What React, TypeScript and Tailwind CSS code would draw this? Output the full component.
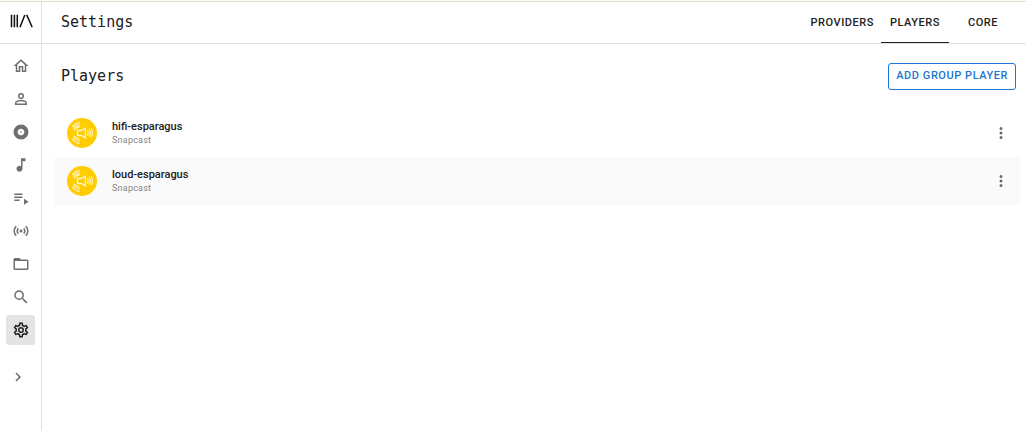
import { useState } from "react";

const icons = {
  home: "M12 5.69L17 10.19V18H15V12H9V18H7V10.19L12 5.69M12 3L2 12H5V20H11V14H13V20H19V12H22L12 3Z",
  account:
    "M12,4A4,4 0 0,1 16,8A4,4 0 0,1 12,12A4,4 0 0,1 8,8A4,4 0 0,1 12,4M12,6A2,2 0 0,0 10,8A2,2 0 0,0 12,10A2,2 0 0,0 14,8A2,2 0 0,0 12,6M12,13C14.67,13 20,14.33 20,17V20H4V17C4,14.33 9.33,13 12,13M12,14.9C9.03,14.9 5.9,16.36 5.9,17V18.1H18.1V17C18.1,16.36 14.97,14.9 12,14.9Z",
  album:
    "M12,11A1,1 0 0,0 11,12A1,1 0 0,0 12,13A1,1 0 0,0 13,12A1,1 0 0,0 12,11M12,16.5C9.5,16.5 7.5,14.5 7.5,12C7.5,9.5 9.5,7.5 12,7.5C14.5,7.5 16.5,9.5 16.5,12C16.5,14.5 14.5,16.5 12,16.5M12,2A10,10 0 0,0 2,12A10,10 0 0,0 12,22A10,10 0 0,0 22,12A10,10 0 0,0 12,2Z",
  note: "M12 3V13.55C11.41 13.21 10.73 13 10 13C7.79 13 6 14.79 6 17S7.79 21 10 21S14 19.21 14 17V7H18V3H12Z",
  playlist: "M3 10H14V12H3V10M3 6H14V8H3V6M3 14H10V16H3V14M16 13V21L22 17L16 13Z",
  radio:
    "M4.93,4.93C3.12,6.74 2,9.24 2,12C2,14.76 3.12,17.26 4.93,19.07L6.34,17.66C4.89,16.22 4,14.22 4,12C4,9.79 4.89,7.78 6.34,6.34L4.93,4.93M19.07,4.93L17.66,6.34C19.11,7.78 20,9.79 20,12C20,14.22 19.11,16.22 17.66,17.66L19.07,19.07C20.88,17.26 22,14.76 22,12C22,9.24 20.88,6.74 19.07,4.93M7.76,7.76C6.67,8.85 6,10.35 6,12C6,13.65 6.67,15.15 7.76,16.24L9.17,14.83C8.45,14.11 8,13.11 8,12C8,10.89 8.45,9.89 9.17,9.17L7.76,7.76M16.24,7.76L14.83,9.17C15.55,9.89 16,10.89 16,12C16,13.11 15.55,14.11 14.83,14.83L16.24,16.24C17.33,15.15 18,13.65 18,12C18,10.35 17.33,8.85 16.24,7.76M12,10A2,2 0 0,0 10,12A2,2 0 0,0 12,14A2,2 0 0,0 14,12A2,2 0 0,0 12,10Z",
  folder:
    "M20,18H4V8H20M20,6H12L10,4H4C2.89,4 2,4.89 2,6V18A2,2 0 0,0 4,20H20A2,2 0 0,0 22,18V8C22,6.89 21.1,6 20,6Z",
  search:
    "M9.5,3A6.5,6.5 0 0,1 16,9.5C16,11.11 15.41,12.59 14.44,13.73L14.71,14H15.5L20.5,19L19,20.5L14,15.5V14.71L13.73,14.44C12.59,15.41 11.11,16 9.5,16A6.5,6.5 0 0,1 3,9.5A6.5,6.5 0 0,1 9.5,3M9.5,5C7,5 5,7 5,9.5C5,12 7,14 9.5,14C12,14 14,12 14,9.5C14,7 12,5 9.5,5Z",
  cog: "M12,8A4,4 0 0,1 16,12A4,4 0 0,1 12,16A4,4 0 0,1 8,12A4,4 0 0,1 12,8M12,10A2,2 0 0,0 10,12A2,2 0 0,0 12,14A2,2 0 0,0 14,12A2,2 0 0,0 12,10M10,22C9.75,22 9.54,21.82 9.5,21.58L9.13,18.93C8.5,18.68 7.96,18.34 7.44,17.94L4.95,18.95C4.73,19.03 4.46,18.95 4.34,18.73L2.34,15.27C2.21,15.05 2.27,14.78 2.46,14.63L4.57,12.97L4.5,12L4.57,11L2.46,9.37C2.27,9.22 2.21,8.95 2.34,8.73L4.34,5.27C4.46,5.05 4.73,4.96 4.95,5.05L7.44,6.05C7.96,5.66 8.5,5.32 9.13,5.07L9.5,2.42C9.54,2.18 9.75,2 10,2H14C14.25,2 14.46,2.18 14.5,2.42L14.87,5.07C15.5,5.32 16.04,5.66 16.56,6.05L19.05,5.05C19.27,4.96 19.54,5.05 19.66,5.27L21.66,8.73C21.79,8.95 21.73,9.22 21.54,9.37L19.43,11L19.5,12L19.43,13L21.54,14.63C21.73,14.78 21.79,15.05 21.66,15.27L19.66,18.73C19.54,18.95 19.27,19.04 19.05,18.95L16.56,17.95C16.04,18.34 15.5,18.68 14.87,18.93L14.5,21.58C14.46,21.82 14.25,22 14,22H10M11.25,4L10.88,6.61C9.68,6.86 8.62,7.5 7.85,8.39L5.44,7.35L4.69,8.65L6.8,10.2C6.4,11.37 6.4,12.64 6.8,13.8L4.68,15.36L5.43,16.66L7.86,15.62C8.63,16.5 9.68,17.14 10.87,17.38L11.24,20H12.76L13.13,17.39C14.32,17.14 15.37,16.5 16.14,15.62L18.57,16.66L19.32,15.36L17.2,13.81C17.6,12.64 17.6,11.37 17.2,10.2L19.31,8.65L18.56,7.35L16.15,8.39C15.38,7.5 14.32,6.86 13.12,6.62L12.75,4H11.25Z",
  chevron: "M8.59,16.58L13.17,12L8.59,7.41L10,6L16,12L10,18L8.59,16.58Z",
  dots: "M12,16A2,2 0 0,1 14,18A2,2 0 0,1 12,20A2,2 0 0,1 10,18A2,2 0 0,1 12,16M12,10A2,2 0 0,1 14,12A2,2 0 0,1 12,14A2,2 0 0,1 10,12A2,2 0 0,1 12,10M12,4A2,2 0 0,1 14,6A2,2 0 0,1 12,8A2,2 0 0,1 10,6A2,2 0 0,1 12,4Z",
};

type IconName = keyof typeof icons;

function Icon({ name }: { name: IconName }) {
  return (
    <svg viewBox="0 0 24 24" className="size-[18px] fill-current" aria-hidden="true">
      <path d={icons[name]} />
    </svg>
  );
}

function Logo() {
  return (
    <svg viewBox="0 0 24 14" className="h-3.5 w-6" fill="none" stroke="#111" strokeWidth="1.5" aria-hidden="true">
      <path d="M2.5 .8V13.2M5.4 .8V13.2M8.3 .8V13.2M11 13.2L15.8 .9M17.7 .9L23.2 13.2" />
    </svg>
  );
}

function SnapcastLogo() {
  return (
    <svg viewBox="0 0 30 30" className="size-[30px] shrink-0" fill="none" stroke="#fff6cc" strokeWidth="1.1" aria-hidden="true">
      <circle cx="15" cy="15" r="15" fill="#fc0" stroke="none" />
      <path d="M10.5 12.5H14.4L18.4 10.2V19.8L14.4 17.5H10.5Z" strokeWidth="1.3" />
      <path d="M20.5 12.2Q21.8 15 20.5 17.8M22.5 11Q24.2 15 22.5 19M24.4 10.4Q26.4 15 24.4 19.6" />
      <path d="M5.3 9Q7.7 5.4 12.6 4.4M6 10.7Q8.4 7.4 12.8 6.5M7 12.2Q9.2 9.4 12.8 8.6" />
      <path d="M5.3 21Q7.7 24.6 12.6 25.6M6 19.3Q8.4 22.6 12.8 23.5M7 17.8Q9.2 20.6 12.8 21.4" />
    </svg>
  );
}

const navItems: { icon: IconName; label: string }[] = [
  { icon: "home", label: "Home" },
  { icon: "account", label: "Artists" },
  { icon: "album", label: "Albums" },
  { icon: "note", label: "Tracks" },
  { icon: "playlist", label: "Playlists" },
  { icon: "radio", label: "Radio" },
  { icon: "folder", label: "Browse" },
  { icon: "search", label: "Search" },
  { icon: "cog", label: "Settings" },
];

const tabs = ["PROVIDERS", "PLAYERS", "CORE"];

const players = [
  { name: "hifi-esparagus", provider: "Snapcast" },
  { name: "loud-esparagus", provider: "Snapcast" },
];

export default function App() {
  const [tab, setTab] = useState("PLAYERS");

  return (
    <div className="flex min-h-screen flex-col bg-white font-[Roboto,sans-serif] text-[#212121]">
      <div className="h-0.5 border-b border-[#deded0] bg-[#fdfdf8]" />
      <div className="flex grow">
        <aside className="flex w-[42px] shrink-0 flex-col border-r border-[#dedede]">
          <a href="#home" aria-label="Music library" className="flex h-[42px] items-center justify-center border-b border-[#e0e0e0] pb-1">
            <Logo />
          </a>
          <nav className="flex flex-col gap-[3px] px-1.5 pt-[7px]">
            {navItems.map(({ icon, label }) => (
              <a
                key={label}
                href={`#${label.toLowerCase()}`}
                aria-label={label}
                className={
                  label === "Settings"
                    ? "flex h-[30px] items-center justify-center rounded-[3px] bg-[#e4e4e4] text-[#212121]"
                    : "flex h-[30px] items-center justify-center rounded-[3px] text-[#6f6f6f]"
                }
              >
                <Icon name={icon} />
              </a>
            ))}
          </nav>
          <button type="button" aria-label="Expand menu" className="mt-[17px] flex h-[30px] w-9 items-center justify-center text-[#6f6f6f]">
            <Icon name="chevron" />
          </button>
        </aside>

        <div className="flex min-w-0 grow flex-col">
          <header className="flex h-[42px] justify-between border-b border-[#e0e0e0] pr-[9px] pl-[19px]">
            <h1 className="pt-2 font-['DejaVu_Sans_Mono',monospace] text-[15px] leading-6">Settings</h1>
            <div role="tablist" className="flex text-[11px] font-medium tracking-wider">
              {tabs.map((name) => (
                <button
                  key={name}
                  type="button"
                  role="tab"
                  aria-selected={name === tab}
                  onClick={() => setTab(name)}
                  className={
                    name === tab
                      ? "min-w-[68px] border-b border-[#212121] px-[7px] pt-0.5"
                      : "min-w-[68px] border-b border-transparent px-[7px] pt-0.5"
                  }
                >
                  {name}
                </button>
              ))}
            </div>
          </header>

          <main className="pr-1.5 pl-3">
            <div className="flex items-start justify-between pt-[19px] pr-1 pl-[7px]">
              <h2 className="pt-px font-['DejaVu_Sans_Mono',monospace] text-[15px] leading-6">Players</h2>
              <button type="button" className="h-[27px] rounded-[3px] border border-[#1976d2] px-[7px] text-[11px] font-medium tracking-wider text-[#1976d2]">
                ADD GROUP PLAYER
              </button>
            </div>
            <ul className="mt-[19px]">
              {players.map(({ name, provider }) => (
                <li key={name} className="flex h-12 items-center pr-2.5 pl-[13px] even:bg-[#fafafa]">
                  <SnapcastLogo />
                  <div className="ml-[15px] grow pt-px">
                    <div className="text-[11px] leading-[14px] font-medium">{name}</div>
                    <div className="text-[9px] leading-[13px] tracking-wide text-[#858585]">{provider}</div>
                  </div>
                  <button type="button" aria-label={`Options for ${name}`} className="text-[#6a6a6a]">
                    <Icon name="dots" />
                  </button>
                </li>
              ))}
            </ul>
          </main>
        </div>
      </div>
    </div>
  );
}
